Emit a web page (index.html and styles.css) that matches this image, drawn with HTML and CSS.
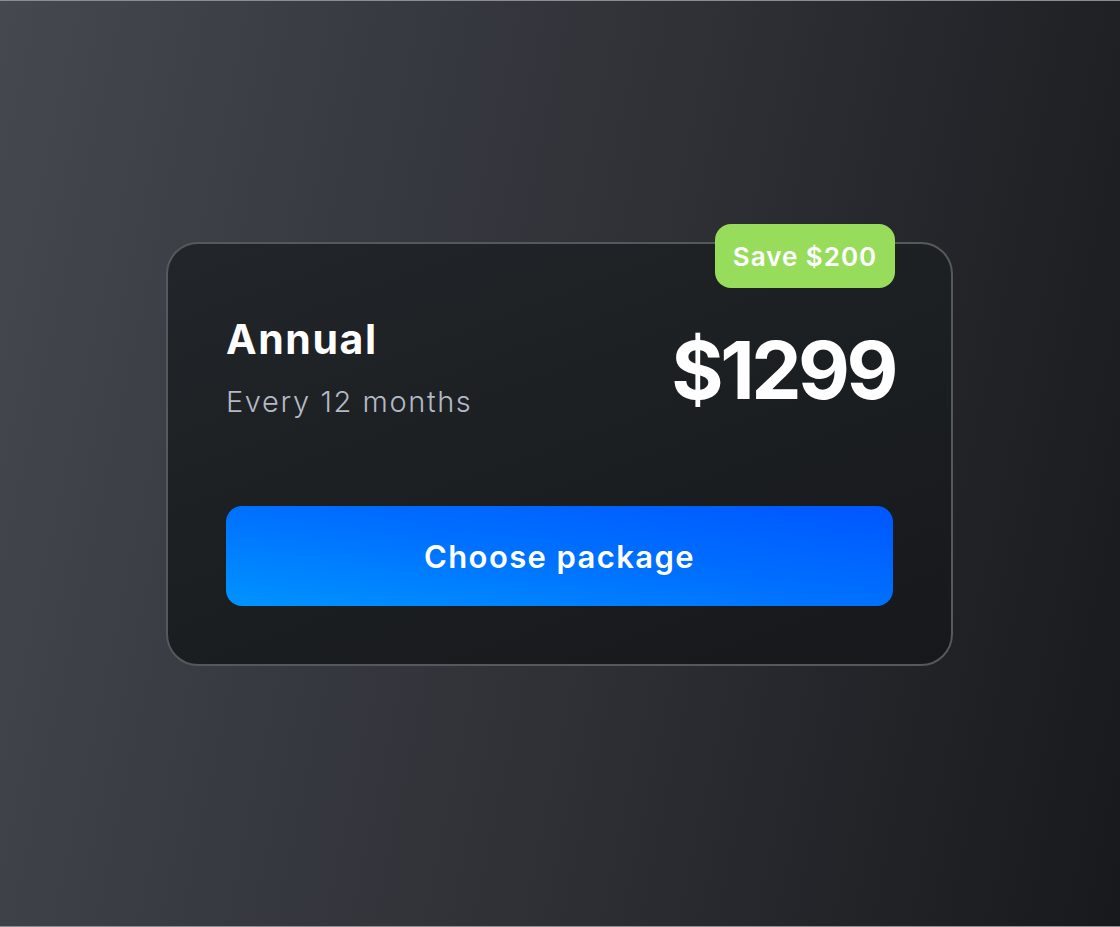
FILE: index.html
```html
<!DOCTYPE html>
<html lang="en">
<head>
<meta charset="utf-8">
<title>Pricing</title>
<link rel="stylesheet" href="styles.css">
</head>
<body>
<main class="stage">
  <section class="card">
    <span class="badge">Save $200</span>
    <div class="head">
      <div class="plan">
        <h2 class="plan-name">Annual</h2>
        <p class="plan-period">Every 12 months</p>
      </div>
      <div class="price">$1299</div>
    </div>
    <button class="cta" type="button">Choose package</button>
  </section>
</main>
</body>
</html>
```

FILE: styles.css
```css
* { box-sizing: border-box; }

html, body {
  margin: 0;
  padding: 0;
}

body {
  font-family: "Inter", "Liberation Sans", sans-serif;
  color: #ffffff;
}

.stage {
  width: 1120px;
  height: 927px;
  border-top: 1px solid #8b8d91;
  border-bottom: 1px solid #8b8d91;
  background: linear-gradient(102deg, #45484f 0%, #383a41 30%, #2e3036 55%, #17191c 100%);
  display: flex;
  justify-content: center;
  align-items: flex-start;
  padding: 241px 1px 0 0;
}

.card {
  position: relative;
  width: 787px;
  height: 424px;
  border: 2px solid #55585d;
  border-radius: 32px;
  background: linear-gradient(160deg, #222529 0%, #1c1f22 50%, #16181b 100%);
  padding: 71px 58px 58px 58px;
  display: flex;
  flex-direction: column;
}

.badge {
  position: absolute;
  top: -20px;
  right: 56px;
  width: 180px;
  height: 64px;
  border-radius: 16px;
  background: #98dc5b;
  color: #ffffff;
  font-size: 26px;
  font-weight: 600;
  display: flex;
  align-items: center;
  justify-content: center;
  letter-spacing: 1px;
}

.head {
  display: flex;
  justify-content: space-between;
  align-items: flex-start;
}

.plan-name {
  margin: 0;
  font-size: 41px;
  line-height: 48px;
  font-weight: 700;
  letter-spacing: 1.6px;
}

.plan-period {
  margin: 22px 0 0;
  font-size: 29px;
  line-height: 34px;
  font-weight: 300;
  color: #b3b9c5;
  letter-spacing: 1.6px;
}

.price {
  margin-top: 15px;
  font-size: 80px;
  line-height: 80px;
  font-weight: 700;
  letter-spacing: -3.5px;
  margin-right: -2px;
}

.cta {
  margin-top: auto;
  width: 100%;
  height: 100px;
  border: 0;
  border-radius: 16px;
  background: linear-gradient(to top right, #0093ff 0%, #0070ff 50%, #0056ff 100%);
  color: #ffffff;
  font-family: inherit;
  font-size: 31px;
  font-weight: 600;
  letter-spacing: 1.4px;
  cursor: pointer;
}
```
